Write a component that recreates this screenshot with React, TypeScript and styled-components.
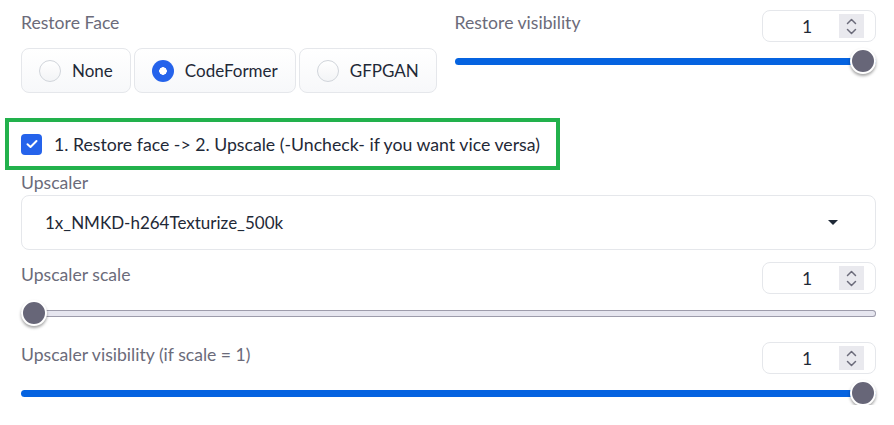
import React from "react";
import styled, { createGlobalStyle } from "styled-components";

const GlobalStyle = createGlobalStyle`
  html, body { margin: 0; padding: 0; background: #ffffff; }
  body { font-family: "Source Sans Pro", Lato, "Open Sans", sans-serif; color: #1f2937; }
  * { box-sizing: border-box; }
`;

const Page = styled.div`
  width: 894px;
  padding: 10px 18px 0 21px;
`;

const TopRow = styled.div`
  display: grid;
  grid-template-columns: 1fr 1fr;
  column-gap: 12px;
  align-items: start;
`;

const Column = styled.div`
  display: flex;
  flex-direction: column;
`;

const Label = styled.span<{ $mt?: number; $mb?: number }>`
  display: block;
  font-size: 17.6px;
  line-height: 22px;
  color: #6b6b7a;
  margin-top: ${(p) => p.$mt ?? 2}px;
  margin-bottom: ${(p) => p.$mb ?? 0}px;
`;

const RadioGroup = styled.div`
  display: flex;
  gap: 3px;
`;

const RadioOption = styled.label`
  display: flex;
  align-items: center;
  gap: 11px;
  height: 45px;
  padding: 0 17px;
  border: 1px solid #e5e7eb;
  border-radius: 8px;
  background: linear-gradient(to bottom, #ffffff, #f7f8fa);
  font-size: 17px;
  color: #1f2937;
  cursor: pointer;
`;

const RadioDot = styled.span<{ $checked?: boolean }>`
  width: 22px;
  height: 22px;
  border-radius: 50%;
  flex-shrink: 0;
  ${(p) =>
    p.$checked
      ? `background: radial-gradient(circle, #ffffff 0 3.5px, #2563eb 4px);`
      : `background: linear-gradient(to bottom, #ffffff, #f3f4f6); border: 1px solid #d1d5db;`}
`;

const SliderBlock = styled.div<{ $mt?: number }>`
  display: flex;
  flex-direction: column;
  margin-top: ${(p) => p.$mt ?? 0}px;
`;

const SliderHeader = styled.div`
  display: flex;
  justify-content: space-between;
  align-items: flex-start;
  margin-bottom: 7px;
`;

const NumberBox = styled.div`
  display: flex;
  align-items: center;
  width: 114px;
  height: 32px;
  border: 1px solid #e5e7eb;
  border-radius: 8px;
  background: #ffffff;
  padding-right: 11px;
`;

const NumberValue = styled.span`
  flex: 1;
  text-align: center;
  padding-left: 12px;
  font-size: 17.5px;
  color: #1f2937;
`;

const Spinner = styled.span`
  display: flex;
  flex-direction: column;
  align-items: center;
  justify-content: center;
  width: 25px;
  height: 24px;
  background: #e9e9ee;
  gap: 3px;
`;

const Range = styled.input<{ $empty?: boolean }>`
  -webkit-appearance: none;
  appearance: none;
  width: 100%;
  height: 24px;
  margin: 0;
  background: transparent;
  &::-webkit-slider-runnable-track {
    height: 7px;
    border-radius: 4px;
    background: var(--fill);
    ${(p) => (p.$empty ? "box-shadow: inset 0 0 0 1px #9d9cab;" : "")}
  }
  &::-webkit-slider-thumb {
    -webkit-appearance: none;
    width: 26px;
    height: 26px;
    margin-top: -9.5px;
    border-radius: 50%;
    background: #676678;
    border: 2px solid #ffffff;
    box-shadow: 0 2px 3px rgba(0, 0, 0, 0.35);
  }
`;

const CheckRow = styled.label`
  display: flex;
  align-items: center;
  gap: 12px;
  width: 555px;
  height: 52px;
  margin: 25px 0 0 -16px;
  padding-left: 12px;
  border: 4px solid #22b14c;
  font-size: 17.7px;
  color: #1f2937;
`;

const CheckBox = styled.span`
  display: flex;
  align-items: center;
  justify-content: center;
  width: 21px;
  height: 21px;
  border-radius: 4px;
  background: #2563eb;
`;

const Dropdown = styled.div`
  display: flex;
  align-items: center;
  justify-content: space-between;
  height: 55px;
  margin-top: 1px;
  padding: 0 37px 0 23px;
  border: 1px solid #e5e7eb;
  border-radius: 8px;
  background: #ffffff;
  font-size: 17px;
  color: #1f2937;
`;

const Caret = styled.span`
  width: 0;
  height: 0;
  border-left: 5px solid transparent;
  border-right: 5px solid transparent;
  border-top: 5px solid #1f2937;
`;

const Chevron = ({ up }: { up?: boolean }) => (
  <svg width="11" height="7" viewBox="0 0 11 7">
    <path
      d={up ? "M1.5 5.5 L5.5 1.5 L9.5 5.5" : "M1.5 1.5 L5.5 5.5 L9.5 1.5"}
      fill="none"
      stroke="#6b6b7a"
      strokeWidth="1.5"
      strokeLinecap="round"
      strokeLinejoin="round"
    />
  </svg>
);

const Slider = ({
  label,
  value,
  min,
  max,
  mt,
}: {
  label: string;
  value: number;
  min: number;
  max: number;
  mt?: number;
}) => {
  const pct = ((value - min) / (max - min)) * 100;
  return (
    <SliderBlock $mt={mt}>
      <SliderHeader>
        <Label>{label}</Label>
        <NumberBox>
          <NumberValue>{value}</NumberValue>
          <Spinner>
            <Chevron up />
            <Chevron />
          </Spinner>
        </NumberBox>
      </SliderHeader>
      <Range
        type="range"
        min={min}
        max={max}
        step={0.05}
        defaultValue={value}
        $empty={pct === 0}
        style={{ ["--fill" as any]: `linear-gradient(to right, #0563e0 ${pct}%, #e6e6ef ${pct}%)` }}
      />
    </SliderBlock>
  );
};

export default function App() {
  return (
    <>
      <GlobalStyle />
      <Page>
        <TopRow>
          <Column>
            <Label $mb={14}>Restore Face</Label>
            <RadioGroup>
              <RadioOption>
                <RadioDot />
                None
              </RadioOption>
              <RadioOption>
                <RadioDot $checked />
                CodeFormer
              </RadioOption>
              <RadioOption>
                <RadioDot />
                GFPGAN
              </RadioOption>
            </RadioGroup>
          </Column>
          <Column>
            <Slider label="Restore visibility" value={1} min={0} max={1} />
          </Column>
        </TopRow>

        <CheckRow>
          <CheckBox>
            <svg width="12" height="10" viewBox="0 0 12 10">
              <path d="M1.5 5.2 L4.5 8 L10.5 2" fill="none" stroke="#fff" strokeWidth="2" strokeLinecap="round" strokeLinejoin="round" />
            </svg>
          </CheckBox>
          1. Restore face -&gt; 2. Upscale (-Uncheck- if you want vice versa)
        </CheckRow>

        <Label>Upscaler</Label>
        <Dropdown>
          1x_NMKD-h264Texturize_500k
          <Caret />
        </Dropdown>

        <Slider label="Upscaler scale" value={1} min={1} max={8} mt={12} />
        <Slider label="Upscaler visibility (if scale = 1)" value={1} min={0} max={1} mt={17} />
      </Page>
    </>
  );
}
